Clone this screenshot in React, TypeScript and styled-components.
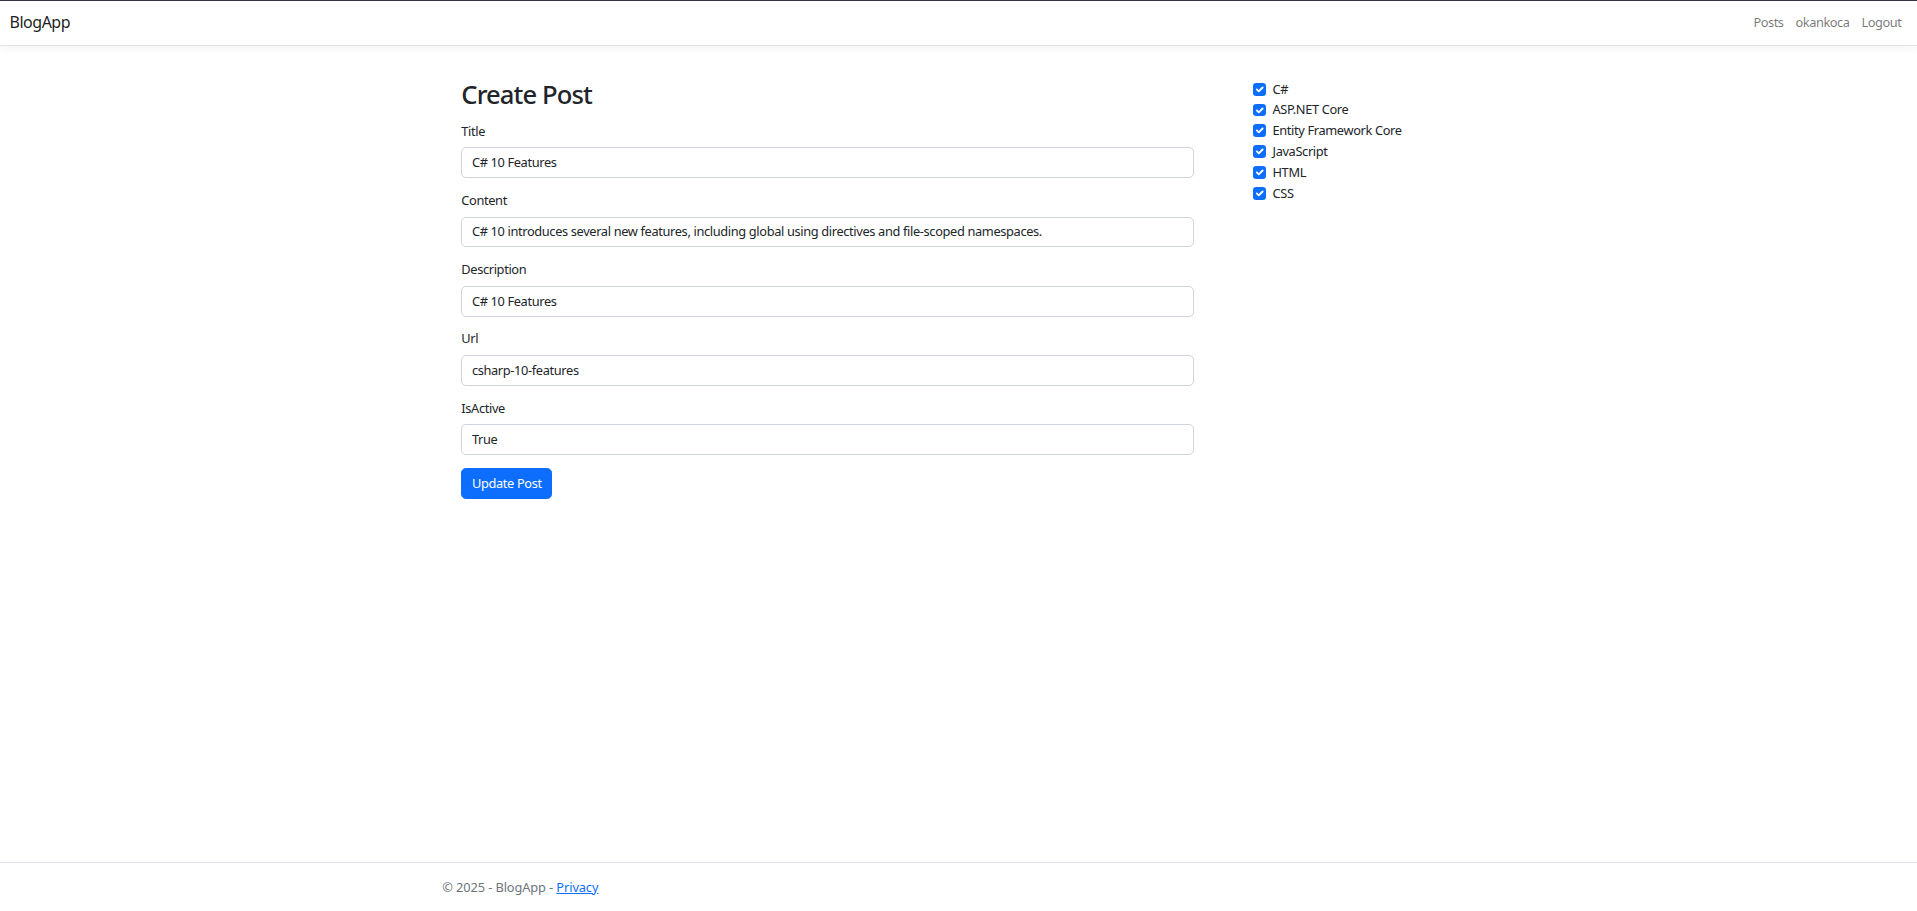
import React from "react";
import styled, { createGlobalStyle } from "styled-components";

const GlobalStyle = createGlobalStyle`
  *, *::before, *::after { box-sizing: border-box; }
  html, body { margin: 0; padding: 0; background: #fff; }
  body {
    font-family: "Noto Sans", "Open Sans", sans-serif;
    font-size: 12.8px;
    line-height: 1.5;
    letter-spacing: -0.35px;
    color: #212529;
  }
`;

const Page = styled.div`
  display: flex;
  flex-direction: column;
  min-height: 100vh;
`;

const Navbar = styled.header`
  display: flex;
  align-items: center;
  justify-content: space-between;
  padding: 5.4px 9.6px 6.4px;
  border-top: 1px solid #34323b;
  border-bottom: 1px solid #dee2e6;
  box-shadow: 0 3.2px 9.6px rgba(0, 0, 0, 0.05);
  margin-bottom: 12.8px;
  background: #fff;
`;

const Brand = styled.a`
  font-size: 16px;
  line-height: 24px;
  letter-spacing: -0.5px;
  padding: 4px 0;
  color: rgba(0, 0, 0, 0.9);
  text-decoration: none;
`;

const NavList = styled.nav`
  display: flex;
  align-items: center;
`;

const NavLink = styled.a`
  padding: 6.4px 6px;
  font-size: 12.8px;
  line-height: 19.2px;
  letter-spacing: -0.45px;
  color: rgba(0, 0, 0, 0.55);
  text-decoration: none;
`;

const Main = styled.main`
  width: 1056px;
  margin: 0 auto;
  display: flex;
`;

const Column = styled.section<{ $span: number }>`
  width: ${(p) => (1056 * p.$span) / 12}px;
  padding: 21px 28.8px 0 30.8px;
`;

const Heading = styled.h2`
  margin: 0 0 11.6px;
  font-size: 25.6px;
  line-height: 30.72px;
  letter-spacing: -0.9px;
  font-weight: 500;
`;

const FormGroup = styled.div`
  margin-bottom: 12.8px;
`;

const Label = styled.label`
  display: block;
  margin-bottom: 6.4px;
  line-height: 19.2px;
`;

const Input = styled.input`
  display: block;
  width: 100%;
  padding: 4.8px 9.6px;
  font-family: inherit;
  font-size: 12.8px;
  line-height: 19.2px;
  letter-spacing: inherit;
  color: #212529;
  background: #fff;
  border: 1px solid #ced4da;
  border-radius: 4.8px;
  outline: none;
`;

const Button = styled.button`
  display: inline-block;
  padding: 4.8px 9.6px;
  font-family: inherit;
  font-size: 12.8px;
  line-height: 19.2px;
  letter-spacing: inherit;
  color: #fff;
  background: #0d6efd;
  border: 1px solid #0d6efd;
  border-radius: 4.8px;
  cursor: pointer;
`;

const Check = styled.label`
  display: flex;
  align-items: flex-start;
  min-height: 19.2px;
  margin-bottom: 1.6px;
  line-height: 19.2px;
`;

const CheckBox = styled.span`
  flex: none;
  width: 12.8px;
  height: 12.8px;
  margin-top: 3.2px;
  margin-right: 6.4px;
  border-radius: 3.2px;
  background: #0d6efd;
  display: flex;
  svg {
    width: 100%;
    height: 100%;
  }
`;

const Footer = styled.footer`
  margin-top: auto;
  border-top: 1px solid #dee2e6;
  line-height: 48px;
  letter-spacing: -0.1px;
  color: #6c757d;
  white-space: nowrap;
`;

const FooterInner = styled.div`
  width: 1056px;
  margin: 0 auto;
  padding: 0 9.6px 0 11.8px;
`;

const FooterLink = styled.a`
  color: #0d6efd;
  text-decoration: underline;
`;

const fields = [
  { label: "Title", value: "C# 10 Features" },
  {
    label: "Content",
    value:
      "C# 10 introduces several new features, including global using directives and file-scoped namespaces.",
  },
  { label: "Description", value: "C# 10 Features" },
  { label: "Url", value: "csharp-10-features" },
  { label: "IsActive", value: "True" },
];

const tags = ["C#", "ASP.NET Core", "Entity Framework Core", "JavaScript", "HTML", "CSS"];

const CheckMark = () => (
  <svg viewBox="0 0 20 20">
    <path
      d="m6 10 3 3 6-6"
      fill="none"
      stroke="#fff"
      strokeWidth="3"
      strokeLinecap="round"
      strokeLinejoin="round"
    />
  </svg>
);

export default function App() {
  return (
    <>
      <GlobalStyle />
      <Page>
        <Navbar>
          <Brand href="#">BlogApp</Brand>
          <NavList>
            <NavLink href="#">Posts</NavLink>
            <NavLink href="#">okankoca</NavLink>
            <NavLink href="#">Logout</NavLink>
          </NavList>
        </Navbar>
        <Main>
          <Column $span={9}>
            <Heading>Create Post</Heading>
            <form onSubmit={(e) => e.preventDefault()}>
              {fields.map((f) => (
                <FormGroup key={f.label}>
                  <Label>{f.label}</Label>
                  <Input defaultValue={f.value} />
                </FormGroup>
              ))}
              <Button type="submit">Update Post</Button>
            </form>
          </Column>
          <Column $span={3}>
            {tags.map((t) => (
              <Check key={t}>
                <CheckBox>
                  <CheckMark />
                </CheckBox>
                {t}
              </Check>
            ))}
          </Column>
        </Main>
        <Footer>
          <FooterInner>
            © 2025 - BlogApp - <FooterLink href="#">Privacy</FooterLink>
          </FooterInner>
        </Footer>
      </Page>
    </>
  );
}
